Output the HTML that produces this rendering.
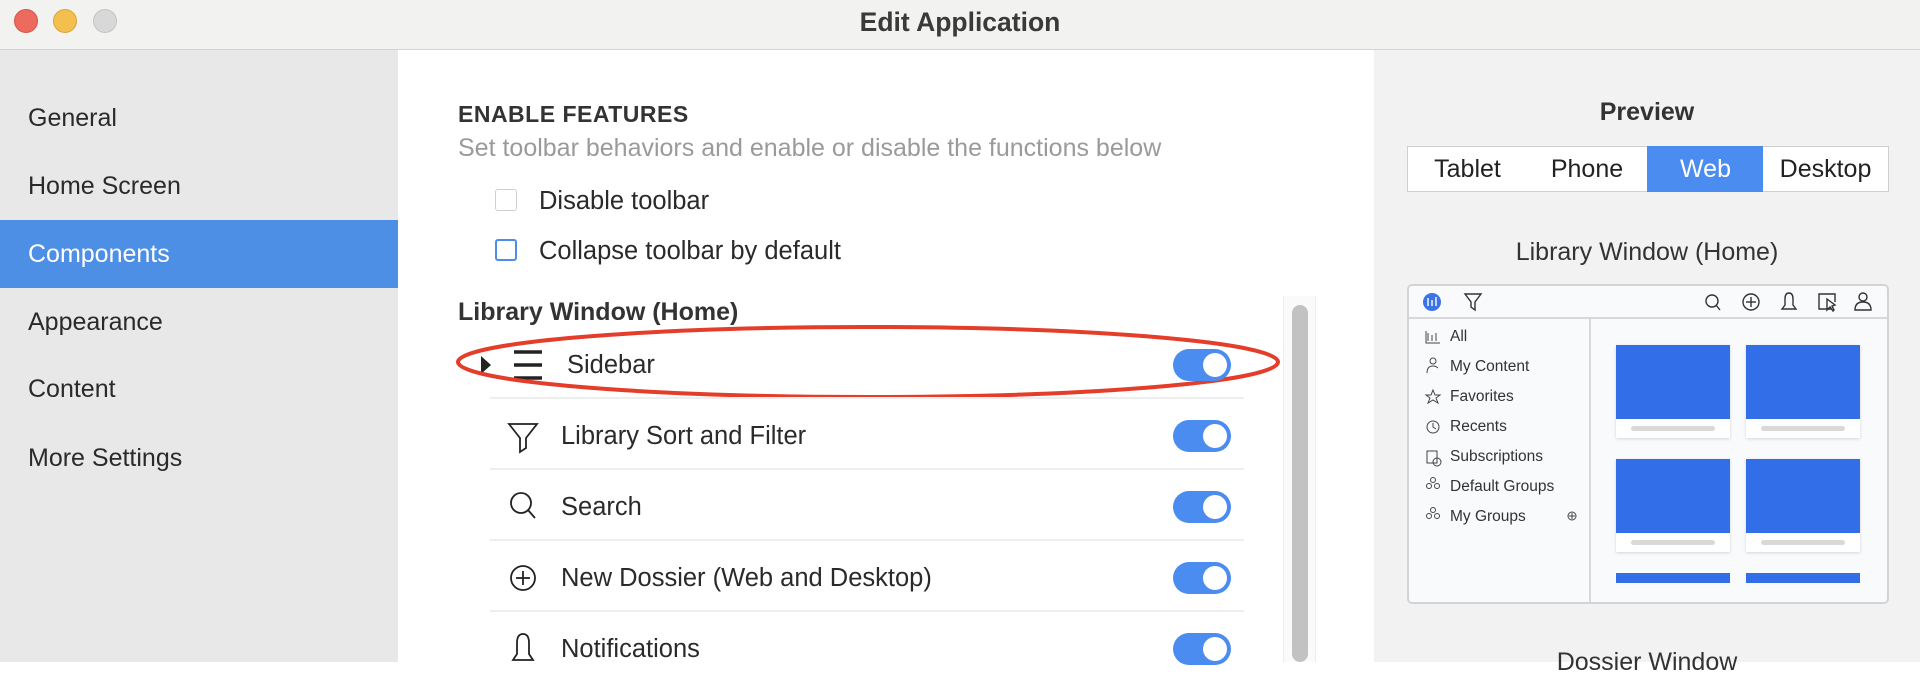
<!DOCTYPE html>
<html><head><meta charset="utf-8"><style>
*{margin:0;padding:0;box-sizing:border-box}
body{width:1920px;height:662px;overflow:hidden;font-family:"Liberation Sans",sans-serif;background:#fff;position:relative;color:#2a2a2a}
.abs{position:absolute}
.tb{left:0;top:0;width:1920px;height:50px;background:#f2f2f1;border-bottom:1px solid #d4d4d4}
.dot{width:24px;height:24px;border-radius:50%;top:9px}
.side{left:0;top:50px;width:398px;height:612px;background:#e8e8e8}
.si{left:28px;font-size:25px;color:#2a2a2a;line-height:28px}
.right{left:1374px;top:50px;width:546px;height:612px;background:#f2f2f2}
.txt{font-size:25.5px;line-height:28px;white-space:nowrap}
.sep{left:490px;width:754px;height:2px;background:#eeeeee}
.tog{left:1173px;width:58px;height:32px;border-radius:16px;background:#4a8cf0}
.tog::after{content:"";position:absolute;right:4px;top:4px;width:24px;height:24px;border-radius:50%;background:#fff}
.seg{top:146px;height:46px;border:1px solid #cfcfcf;background:#fff;font-size:25px;line-height:44px;text-align:center;color:#222}
.pi{left:1450px;font-size:15.5px;color:#333;line-height:16px;white-space:nowrap}
.card{width:114px;height:93px;background:#fff;box-shadow:0 1px 3px rgba(0,0,0,.15)}
.card .b{height:74px;background:#326ee8;position:relative;overflow:hidden}
.card .l{position:absolute;left:15px;top:81px;width:84px;height:5px;border-radius:3px;background:#d9d9d9}
</style></head><body>
<div class="abs tb"></div>
<div class="abs dot" style="left:14px;background:#ec6a5e;border:1px solid #d5574b"></div>
<div class="abs dot" style="left:53px;background:#f4bf4f;border:1px solid #d9a63c"></div>
<div class="abs dot" style="left:93px;background:#d8d8d8;border:1px solid #c4c4c4"></div>
<div class="abs" style="left:0;width:1920px;top:8px;text-align:center;font-size:26.5px;font-weight:bold;color:#3a3a3a;line-height:28px">Edit Application</div>

<div class="abs side"></div>
<div class="abs si" style="top:104px">General</div>
<div class="abs si" style="top:172px">Home Screen</div>
<div class="abs" style="left:0;top:220px;width:398px;height:68px;background:#4e8fe6"></div>
<div class="abs si" style="top:240px;color:#fff">Components</div>
<div class="abs si" style="top:308px">Appearance</div>
<div class="abs si" style="top:375px">Content</div>
<div class="abs si" style="top:444px">More Settings</div>

<div class="abs" style="left:458px;top:100px;font-size:23px;line-height:28px;font-weight:bold;color:#333;letter-spacing:.5px">ENABLE FEATURES</div>
<div class="abs txt" style="left:458px;top:134px;font-size:25px;color:#9a9a9a">Set toolbar behaviors and enable or disable the functions below</div>
<div class="abs" style="left:495px;top:189px;width:22px;height:22px;border:1px solid #cfcfcf;border-radius:3px"></div>
<div class="abs txt" style="left:539px;top:187px">Disable toolbar</div>
<div class="abs" style="left:495px;top:239px;width:22px;height:22px;border:2px solid #4a8cf0;border-radius:3px"></div>
<div class="abs txt" style="left:539px;top:237px">Collapse toolbar by default</div>
<div class="abs txt" style="left:458px;top:298px;font-weight:bold;font-size:25px;color:#333">Library Window (Home)</div>

<div class="abs" style="left:1283px;top:296px;width:33px;height:366px;background:#fafafa;border-left:1px solid #ececec;border-right:1px solid #ececec"></div>
<div class="abs" style="left:1292px;top:305px;width:16px;height:357px;border-radius:8px;background:#c2c2c2"></div>

<svg class="abs" style="left:0;top:0" width="1920" height="662">
<polygon points="481,356 481,374 491,365" fill="#222"/>
<g stroke="#222" stroke-width="3.5"><line x1="514" y1="352" x2="542" y2="352"/><line x1="514" y1="365" x2="542" y2="365"/><line x1="514" y1="378" x2="542" y2="378"/></g>
<g fill="none" stroke="#222" stroke-width="1.8">
<path d="M509 424 L537 424 L526 438 L526 448 L520 452 L520 438 Z"/>
<circle cx="521" cy="503" r="10"/><line x1="528" y1="510" x2="535" y2="518"/>
<circle cx="523" cy="578" r="12"/><line x1="523" y1="571" x2="523" y2="585"/><line x1="516" y1="578" x2="530" y2="578"/>
<path d="M513 660 L517 654 L517 643 Q517 634 523 634 Q529 634 529 643 L529 654 L533 660 Z"/>
</g>
<ellipse cx="868" cy="362" rx="410" ry="35" fill="none" stroke="#e43d2a" stroke-width="4"/>
</svg>
<div class="abs txt" style="left:567px;top:351px">Sidebar</div>
<div class="abs sep" style="top:397px"></div>
<div class="abs txt" style="left:561px;top:422px">Library Sort and Filter</div>
<div class="abs sep" style="top:468px"></div>
<div class="abs txt" style="left:561px;top:493px">Search</div>
<div class="abs sep" style="top:539px"></div>
<div class="abs txt" style="left:561px;top:564px">New Dossier (Web and Desktop)</div>
<div class="abs sep" style="top:610px"></div>
<div class="abs txt" style="left:561px;top:635px">Notifications</div>
<div class="abs tog" style="top:349px"></div>
<div class="abs tog" style="top:420px"></div>
<div class="abs tog" style="top:491px"></div>
<div class="abs tog" style="top:562px"></div>
<div class="abs tog" style="top:633px"></div>

<div class="abs right"></div>
<div class="abs" style="left:1374px;width:546px;top:98px;text-align:center;font-size:25px;line-height:28px;font-weight:bold;color:#333">Preview</div>
<div class="abs seg" style="left:1407px;width:121px">Tablet</div>
<div class="abs seg" style="left:1527px;width:121px;border-left:none">Phone</div>
<div class="abs seg" style="left:1647px;width:117px;background:#4a8cf0;border-color:#4a8cf0;color:#fff">Web</div>
<div class="abs seg" style="left:1763px;width:126px;border-left:none">Desktop</div>
<div class="abs" style="left:1374px;width:546px;top:238px;text-align:center;font-size:25px;line-height:28px;color:#333">Library Window (Home)</div>

<div class="abs" style="left:1407px;top:284px;width:482px;height:320px;border:2px solid #d4d4d4;border-radius:5px;background:#f9fafc;overflow:hidden">
 <div class="abs" style="left:0;top:31px;width:480px;height:2px;background:#d8d8d8"></div>
 <div class="abs" style="left:180px;top:33px;width:2px;height:290px;background:#d8d8d8"></div>
 <div class="abs" style="left:207px;top:59px" ><div class="card"><div class="b"></div><div class="l"></div></div></div>
 <div class="abs" style="left:337px;top:59px" ><div class="card"><div class="b"></div><div class="l"></div></div></div>
 <div class="abs" style="left:207px;top:173px" ><div class="card"><div class="b"></div><div class="l"></div></div></div>
 <div class="abs" style="left:337px;top:173px" ><div class="card"><div class="b"></div><div class="l"></div></div></div>
 <div class="abs" style="left:207px;top:287px;width:114px;height:10px;background:#326ee8"></div>
 <div class="abs" style="left:337px;top:287px;width:114px;height:10px;background:#326ee8"></div>
</div>
<svg class="abs" style="left:1407px;top:284px" width="482" height="320">
<circle cx="25" cy="18" r="9" fill="#3b73e8"/>
<g stroke="#fff" stroke-width="1.4"><line x1="21" y1="14" x2="21" y2="22"/><line x1="25" y1="16" x2="25" y2="22"/><line x1="29" y1="13" x2="29" y2="22"/></g>
<g fill="none" stroke="#333" stroke-width="1.4">
<path d="M58 10 L74 10 L68 18 L68 26 L64 23 L64 18 Z"/>
<circle cx="305" cy="17" r="6"/><line x1="309" y1="21" x2="313" y2="26"/>
<circle cx="344" cy="18" r="8"/><line x1="344" y1="13" x2="344" y2="23"/><line x1="339" y1="18" x2="349" y2="18"/>
<path d="M375 25 L378 21 L378 15 Q378 9 382 9 Q386 9 386 15 L386 21 L389 25 Z"/>
<path d="M424 25 L412 25 L412 10 L428 10 L428 18"/><path d="M420 15 L420 26 L423 23 L426 27 L427 26 L425 22 L428 21 Z"/>
<circle cx="456" cy="13" r="4"/><path d="M448 26 Q448 18 456 18 Q464 18 464 26 Z"/>
</g>
<g fill="none" stroke="#444" stroke-width="1">
<path d="M19 47 L19 59 L33 59 M21 49 v8 M25 51 v6 M29 49 v8"/>
<circle cx="26" cy="77" r="3"/><path d="M20 89 Q20 82 26 82 Q29 82 31 84"/>
<path d="M26 106 L28 111 L33 111 L29 114 L31 119 L26 116 L21 119 L23 114 L19 111 L24 111 Z"/>
<circle cx="26" cy="143" r="6"/><path d="M26 139 L26 143 L29 145"/>
<rect x="20" y="167" width="10" height="12"/><circle cx="30" cy="178" r="4"/>
<circle cx="26" cy="196" r="2.5"/><circle cx="22" cy="202" r="2.5"/><circle cx="30" cy="202" r="2.5"/>
<circle cx="26" cy="226" r="2.5"/><circle cx="22" cy="232" r="2.5"/><circle cx="30" cy="232" r="2.5"/>
<circle cx="165" cy="232" r="4"/><line x1="165" y1="229" x2="165" y2="235"/><line x1="162" y1="232" x2="168" y2="232"/>
</g>
</svg>
<div class="abs pi" style="top:329px">All</div>
<div class="abs pi" style="top:359px">My Content</div>
<div class="abs pi" style="top:389px">Favorites</div>
<div class="abs pi" style="top:419px">Recents</div>
<div class="abs pi" style="top:449px">Subscriptions</div>
<div class="abs pi" style="top:479px">Default Groups</div>
<div class="abs pi" style="top:509px">My Groups</div>
<div class="abs" style="left:1374px;width:546px;top:648px;text-align:center;font-size:25px;line-height:28px;color:#333">Dossier Window</div>
</body></html>
